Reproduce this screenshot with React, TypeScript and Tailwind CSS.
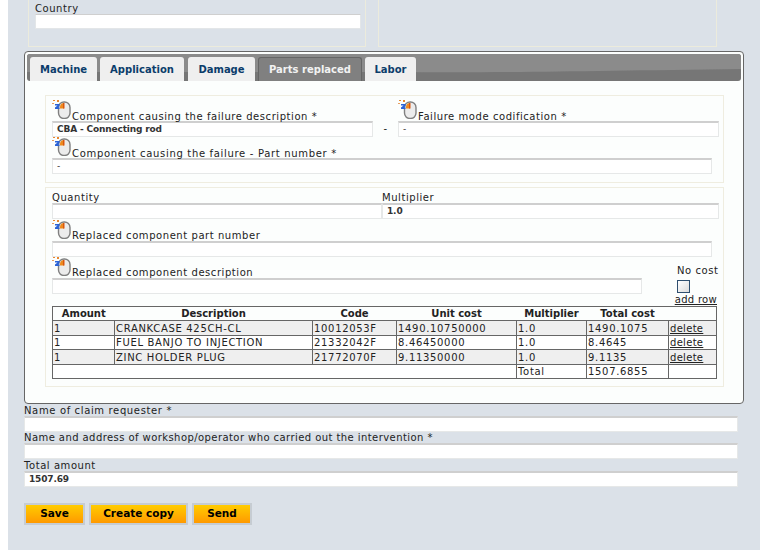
const rows = [
  { amount: '1', description: 'CRANKCASE 425CH-CL', code: '10012053F', unit: '1490.10750000', multiplier: '1.0', total: '1490.1075' },
  { amount: '1', description: 'FUEL BANJO TO INJECTION', code: '21332042F', unit: '8.46450000', multiplier: '1.0', total: '8.4645' },
  { amount: '1', description: 'ZINC HOLDER PLUG', code: '21772070F', unit: '9.11350000', multiplier: '1.0', total: '9.1135' }
]

const tabs = ['Machine', 'Application', 'Damage', 'Parts replaced', 'Labor']

const tabWidths: Record<string, string> = {
  Machine: 'w-[67px]',
  Application: 'w-[84px] mr-px',
  Damage: 'w-[67px]',
  'Parts replaced': 'w-[104px]',
  Labor: 'w-[51px]'
}

function MouseIcon() {
  return (
    <svg width="19" height="19" viewBox="0 0 19 19" className="mb-[2px] shrink-0">
      <rect x="6.5" y="2" width="11.5" height="16.5" rx="5.5" fill="#ececec" stroke="#808080" strokeWidth="1.4" />
      <path d="M8 8.5V6.5a4 4 0 0 1 4-3.5v5.5z" fill="#ee8a1e" />
      <rect x="11" y="3" width="1.5" height="5.5" fill="#d9560f" />
      <path d="M3 4h4.5v2L6 7.5h1.5V9H3V7.5L5.5 5.5H3z" fill="#2a63d8" />
      <rect x="1" y="0" width="2" height="1" fill="#e8862f" />
      <rect x="5" y="0" width="2" height="2" fill="#e8862f" />
      <rect x="0" y="3" width="2" height="1" fill="#e8a060" />
    </svg>
  )
}

function Field({ value, className = '' }: { value?: string; className?: string }) {
  return (
    <div className={`h-[16px] border border-[#e6e8e8] border-t-2 border-t-[#cfcfcf] bg-white px-[4px] text-[9px] font-bold leading-[12px] tracking-[-0.15px] text-[#333] ${className}`}>
      {value}
    </div>
  )
}

function IconLabel({ text, className = 'h-[21px]', labelClass = 'leading-[9px]' }: { text: string; className?: string; labelClass?: string }) {
  return (
    <div className={`flex items-end ${className}`}>
      <MouseIcon />
      <span className={`ml-px ${labelClass}`}>{text}</span>
    </div>
  )
}

export default function App() {
  return (
    <div className="flex h-[550px] w-[765px] overflow-hidden bg-white font-['DejaVu_Sans',sans-serif] text-[10px] tracking-[0.56px] text-[#222]">
      <div className="ml-[8px] h-full w-[752px] bg-[#dbe1e8] pl-[16px]">
        {/* Address boxes, cut off by the top of the page */}
        <div className="ml-[4px] flex h-[47px] gap-[12px]">
          <div className="h-full w-[338px] border-x border-b border-[#ecebdc] px-[6px] pt-[3px]">
            <div className="h-[11px] leading-[11px]">Country</div>
            <div className="h-[15px] w-[326px] border border-[#e3e6e8] border-t-[#cfcfcf] bg-white" />
          </div>
          <div className="h-full w-[339px] border-x border-b border-[#ecebdc]" />
        </div>

        {/* Tab panel */}
        <div className="mt-[4px] h-[353px] w-[720px] rounded-[4px] border border-[#666] bg-[#fcfefd] p-[2px]">
          <div className="relative flex h-[27px] items-end gap-[3px] overflow-hidden rounded-[3px] bg-[#767676] pl-[3px] tracking-normal">
            <svg className="absolute inset-0" width="714" height="27" viewBox="0 0 714 27" preserveAspectRatio="none">
              <path d="M0 0H714V15C560 17 470 19 370 18L0 18Z" fill="#8b8b8b" />
            </svg>
            {tabs.map(tab => (
              <div
                key={tab}
                className={`relative flex h-[24px] items-center justify-center rounded-t-[3px] font-bold ${tabWidths[tab]} ${
                  tab === 'Parts replaced'
                    ? 'border border-b-0 border-[#666] bg-[#808080] text-[#f2f2f2]'
                    : 'bg-[#efefef] text-[#0b3d6b]'
                }`}
              >
                {tab}
              </div>
            ))}
          </div>

          <div className="ml-[18px] mt-[14px] h-[88px] w-[679px] border border-[#efede0] pl-[6px] pr-[2px] pt-[4px]">
            <div className="flex">
              <div className="w-[321px]">
                <IconLabel text="Component causing the failure description *" />
                <Field value="CBA - Connecting rod" />
              </div>
              <div className="flex w-[25px] items-end justify-center pb-[1px]">-</div>
              <div className="w-[321px]">
                <IconLabel text="Failure mode codification *" />
                <Field value="-" className="font-normal" />
              </div>
            </div>
            <div className="tracking-[0.68px]">
              <IconLabel text="Component causing the failure - Part number *" />
            </div>
            <Field value="-" className="w-[660px] font-normal" />
          </div>

          <div className="ml-[18px] mt-[4px] h-[200px] w-[679px] border border-[#efede0] pl-[6px] pr-[2px] pt-[3px]">
            <div className="flex">
              <div className="w-[330px]">
                <div className="h-[12px] leading-[13px]">Quantity</div>
                <Field />
              </div>
              <div className="w-[337px]">
                <div className="h-[12px] leading-[13px]">Multiplier</div>
                <Field value="1.0" />
              </div>
            </div>
            <IconLabel text="Replaced component part number" className="h-[22px]" labelClass="leading-[11px]" />
            <Field className="w-[660px]" />
            <div className="flex w-[665px] justify-between">
              <div className="w-[590px]">
                <IconLabel text="Replaced component description" labelClass="leading-[11px]" />
                <Field />
              </div>
              <div className="flex w-[42px] flex-col items-end pt-[8px] whitespace-nowrap">
                <div className="h-[13px] w-[40px] leading-[12px]">No cost</div>
                <div className="mr-[27px] mt-[2px] size-[13px] border border-[#2f4f6f] bg-gradient-to-br from-white to-[#dcdcdc]" />
                <a className="mt-[1px] leading-[12px] tracking-[0.3px] underline">add row</a>
              </div>
            </div>

            <table className="w-[664px] table-fixed border-collapse border border-[#666] leading-[13px]">
              <colgroup>
                <col className="w-[62px]" />
                <col className="w-[198px]" />
                <col className="w-[84px]" />
                <col className="w-[120px]" />
                <col className="w-[70px]" />
                <col className="w-[82px]" />
                <col className="w-[48px]" />
              </colgroup>
              <thead>
                <tr className="h-[14px] align-bottom font-bold tracking-normal">
                  <th>Amount</th>
                  <th>Description</th>
                  <th>Code</th>
                  <th>Unit cost</th>
                  <th>Multiplier</th>
                  <th>Total cost</th>
                  <th></th>
                </tr>
              </thead>
              <tbody className="tracking-[0.68px]">
                {rows.map((row, i) => (
                  <tr key={row.code} className={`${i === 1 ? 'h-[14px]' : 'h-[15px]'} ${i % 2 === 0 ? 'bg-[#efefef]' : 'bg-white'}`}>
                    <td className="border border-[#666] pl-px">{row.amount}</td>
                    <td className="border border-[#666] pl-px">{row.description}</td>
                    <td className="border border-[#666] pl-px">{row.code}</td>
                    <td className="border border-[#666] pl-px">{row.unit}</td>
                    <td className="border border-[#666] pl-px">{row.multiplier}</td>
                    <td className="border border-[#666] pl-px">{row.total}</td>
                    <td className="border border-[#666] pl-px tracking-[0.3px] underline">delete</td>
                  </tr>
                ))}
                <tr className="h-[14px] bg-white">
                  <td colSpan={4}></td>
                  <td className="border border-[#666] pl-px">Total</td>
                  <td className="border border-[#666] pl-px">1507.6855</td>
                  <td className="border border-[#666]"></td>
                </tr>
              </tbody>
            </table>
          </div>
        </div>

        {/* Claim fields */}
        <div className="mt-[1px] w-[714px]">
          <div className="h-[11px] leading-[11px] tracking-[0.64px]">Name of claim requester *</div>
          <Field />
          <div className="h-[11px] leading-[11px] tracking-[0.43px]">Name and address of workshop/operator who carried out the intervention *</div>
          <Field />
          <div className="h-[12px] leading-[13px]">Total amount</div>
          <Field value="1507.69" className="h-[15px]" />
        </div>

        <div className="mt-[16px] flex gap-[4px] tracking-normal">
          <button className="h-[22px] w-[61px] border-2 border-[#c6ccd2] bg-gradient-to-b from-[#ffcc00] to-[#ff9900] text-[10.5px] font-bold text-black">Save</button>
          <button className="h-[22px] w-[99px] border-2 border-[#c6ccd2] bg-gradient-to-b from-[#ffcc00] to-[#ff9900] text-[10.5px] font-bold text-black">Create copy</button>
          <button className="h-[22px] w-[60px] border-2 border-[#c6ccd2] bg-gradient-to-b from-[#ffcc00] to-[#ff9900] text-[10.5px] font-bold text-black">Send</button>
        </div>
      </div>
    </div>
  )
}
